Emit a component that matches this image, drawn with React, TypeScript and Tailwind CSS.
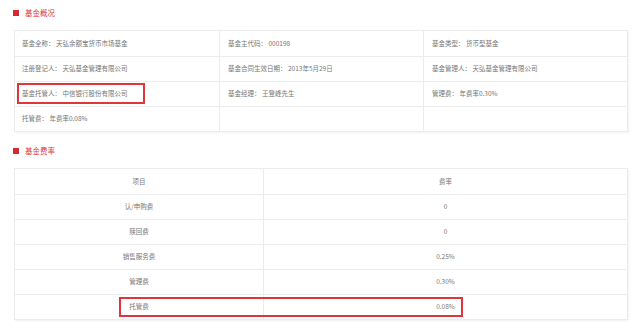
const overview = [
  ['基金全称： 天弘余额宝货币市场基金', '基金主代码： 000198', '基金类型： 货币型基金'],
  ['注册登记人： 天弘基金管理有限公司', '基金合同生效日期： 2013年5月29日', '基金管理人： 天弘基金管理有限公司'],
  ['基金托管人： 中信银行股份有限公司', '基金经理： 王登峰先生', '管理费： 年费率0.30%'],
  ['托管费： 年费率0.08%', '', ''],
]

const fees = [
  ['项目', '费率'],
  ['认/申购费', '0'],
  ['赎回费', '0'],
  ['销售服务费', '0.25%'],
  ['管理费', '0.30%'],
  ['托管费', '0.08%'],
]

const SectionTitle = ({ title }: { title: string }) => (
  <div className="flex items-center gap-[6px] h-[26px] -ml-px">
    <span className="w-[6px] h-[6px] bg-[#d22a2f]" />
    <span className="text-[7.5px] text-[#d8393c]">{title}</span>
  </div>
)

const App = () => {
  return (
    <div
      className="w-[640px] h-[331px] bg-white pl-[14px] pr-[12px] text-[#777]"
      style={{ fontFamily: '"Noto Sans CJK SC", "Noto Sans", sans-serif' }}
    >
      <SectionTitle title="基金概况" />

      <div className="relative mt-[4px] border border-[#ececec] shadow-[1px_1px_2px_rgba(0,0,0,0.06)]">
        {overview.map((row, i) => (
          <div key={i} className={`grid grid-cols-3 h-[25px] ${i > 0 ? 'border-t border-[#ececec]' : ''}`}>
            {row.map((cell, j) => (
              <div
                key={j}
                className={`flex items-center pl-[7px] text-[6.5px] ${j > 0 ? 'border-l border-[#ececec] pl-[8px]' : ''}`}
              >
                {cell}
              </div>
            ))}
          </div>
        ))}
        <div className="absolute left-[2px] top-[52px] w-[128px] h-[21px] border-2 border-[#e0353a]" />
      </div>

      <div className="mt-[6px]">
        <SectionTitle title="基金费率" />
      </div>

      <div className="relative mt-[4px] border border-[#ececec] shadow-[1px_1px_2px_rgba(0,0,0,0.06)]">
        {fees.map((row, i) => (
          <div key={i} className={`grid grid-cols-[248px_1fr] h-[25px] ${i > 0 ? 'border-t border-[#ececec]' : ''}`}>
            <div className="flex items-center justify-center text-[6.5px]">{row[0]}</div>
            <div className="flex items-center justify-center text-[6.5px] border-l border-[#ececec]">{row[1]}</div>
          </div>
        ))}
        <div className="absolute left-[104px] top-[128px] w-[344px] h-[20px] border-2 border-[#e0353a]" />
      </div>
    </div>
  )
}

export default App
